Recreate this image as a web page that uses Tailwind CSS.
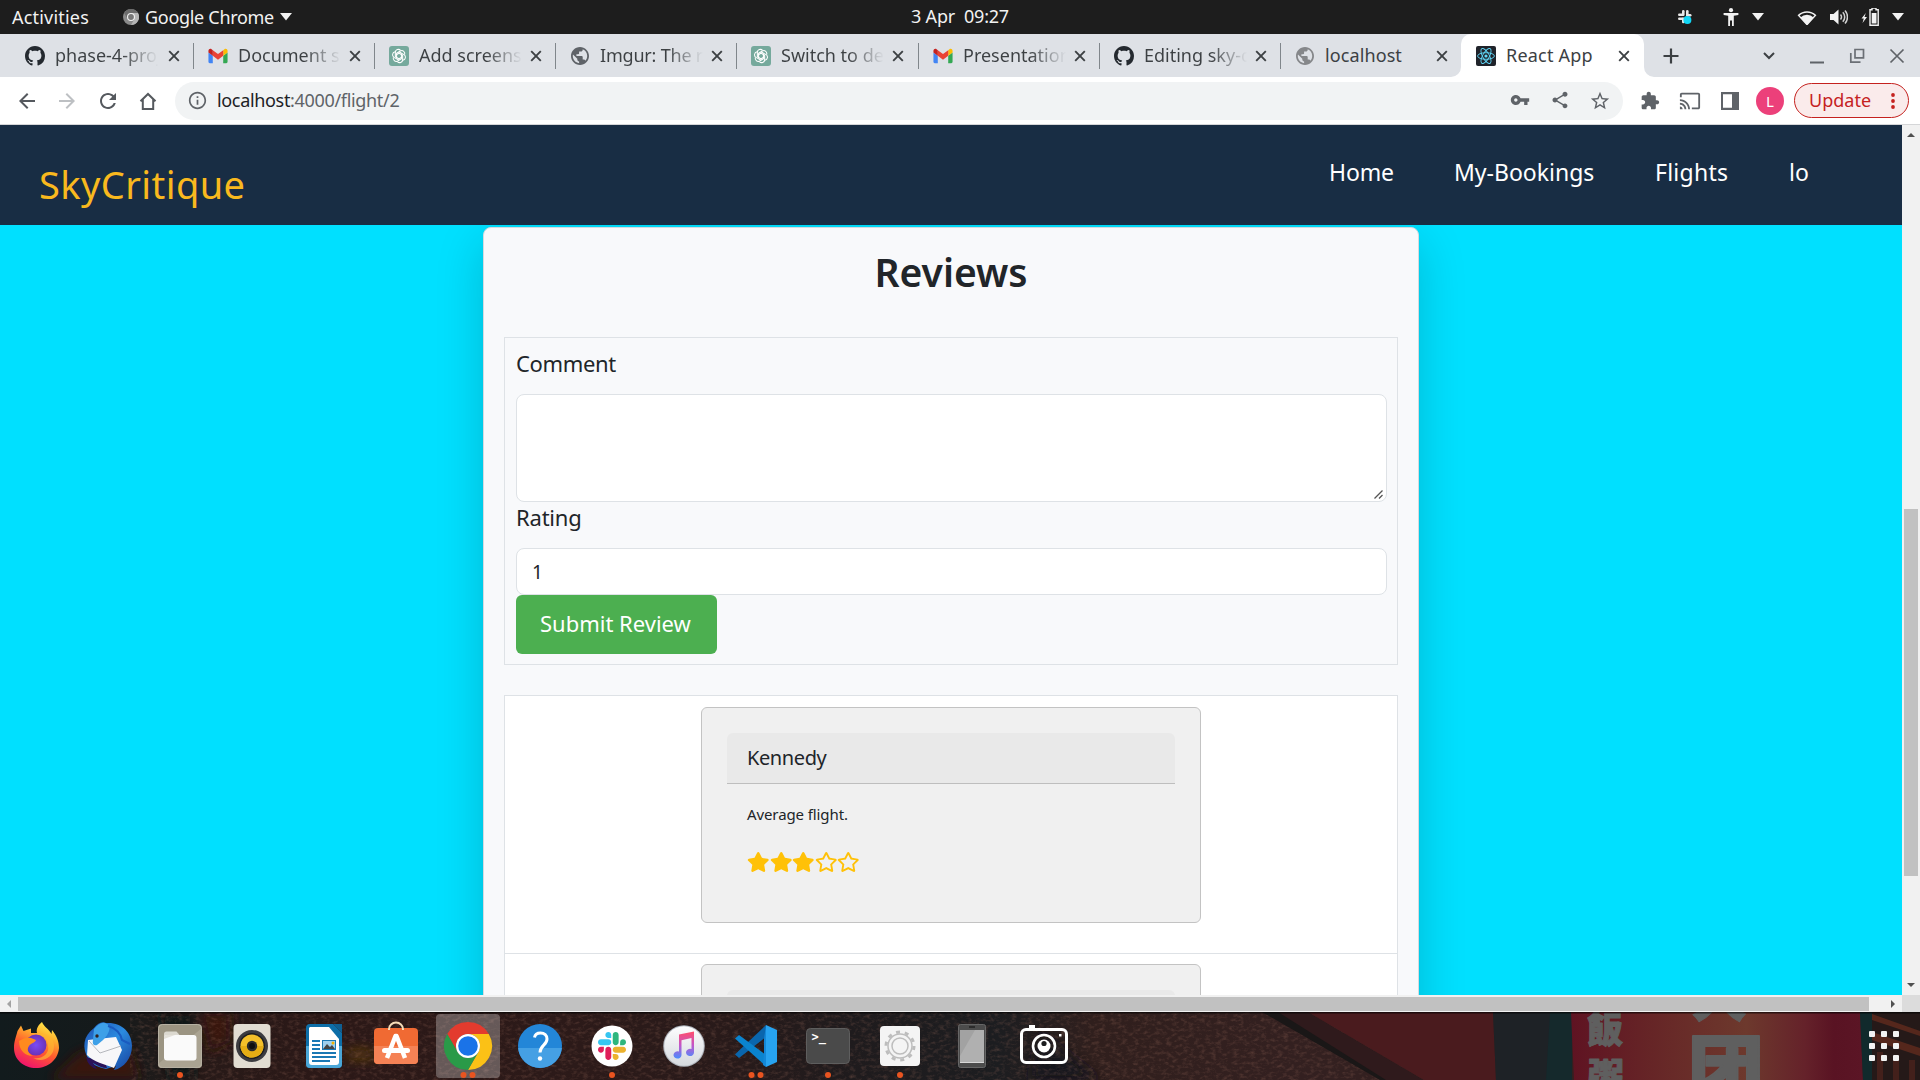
<!DOCTYPE html>
<html lang="en">
<head>
<meta charset="utf-8">
<title>React App</title>
<script src="https://cdn.jsdelivr.net/npm/@tailwindcss/browser@4"></script>
</head>
<body class="w-[1920px] h-[1080px] overflow-hidden flex flex-col font-['Noto_Sans','Noto_Sans_CJK_SC',sans-serif] bg-[#1d1d1d]">

<!-- Shared symbols -->
<svg class="hidden" aria-hidden="true">
  <symbol id="github" viewBox="0 0 16 16"><path fill="#24292f" d="M8 0C3.58 0 0 3.58 0 8c0 3.54 2.29 6.53 5.47 7.59.4.07.55-.17.55-.38 0-.19-.01-.82-.01-1.49-2.01.37-2.53-.49-2.69-.94-.09-.23-.48-.94-.82-1.13-.28-.15-.68-.52-.01-.53.63-.01 1.08.58 1.23.82.72 1.21 1.87.87 2.33.66.07-.52.28-.87.51-1.07-1.78-.2-3.64-.89-3.64-3.95 0-.87.31-1.59.82-2.15-.08-.2-.36-1.02.08-2.12 0 0 .67-.21 2.2.82.64-.18 1.32-.27 2-.27.68 0 1.36.09 2 .27 1.53-1.04 2.2-.82 2.2-.82.44 1.1.16 1.92.08 2.12.51.56.82 1.27.82 2.15 0 3.07-1.87 3.75-3.65 3.95.29.25.54.73.54 1.48 0 1.07-.01 1.93-.01 2.2 0 .21.15.46.55.38A8.013 8.013 0 0016 8c0-4.42-3.58-8-8-8z"/></symbol>
  <symbol id="gmail" viewBox="50 31 92 88"><path fill="#4285f4" d="M58 108h14V74L52 59v43c0 3.32 2.69 6 6 6"/><path fill="#34a853" d="M120 108h14c3.32 0 6-2.69 6-6V59l-20 15"/><path fill="#fbbc04" d="M120 48v26l20-15v-8c0-7.42-8.47-11.65-14.4-7.2"/><path fill="#ea4335" d="M72 74V48l24 18 24-18v26L96 92"/><path fill="#c5221f" d="M52 51v8l20 15V48l-5.6-4.2c-5.94-4.45-14.4-.22-14.4 7.2"/></symbol>
  <symbol id="gpt" viewBox="0 0 20 20"><rect width="20" height="20" rx="3" fill="#75a99c"/><g fill="none" stroke="#fff" stroke-width="1.05" stroke-linejoin="round"><path id="petal" d="M7.6 12.2V7.2L11.3 5a3 3 0 0 1 4.3 3.6"/><use href="#petal" transform="rotate(60 10 10)"/><use href="#petal" transform="rotate(120 10 10)"/><use href="#petal" transform="rotate(180 10 10)"/><use href="#petal" transform="rotate(240 10 10)"/><use href="#petal" transform="rotate(300 10 10)"/></g></symbol>
  <symbol id="globe" viewBox="2 2 20 20"><path d="M12 2C6.48 2 2 6.48 2 12s4.48 10 10 10 10-4.48 10-10S17.52 2 12 2zm-1 17.93c-3.95-.49-7-3.85-7-7.93 0-.62.08-1.21.21-1.79L9 15v1c0 1.1.9 2 2 2v1.93zm6.9-2.54c-.26-.81-1-1.39-1.9-1.39h-1v-3c0-.55-.45-1-1-1H8v-2h2c.55 0 1-.45 1-1V7h2c1.1 0 2-.9 2-2v-.41c2.93 1.19 5 4.06 5 7.41 0 2.08-.8 3.97-2.1 5.39z"/></symbol>
  <symbol id="react" viewBox="0 0 20 20"><rect width="20" height="20" rx="2" fill="#20232a"/><g fill="none" stroke="#61dafb" stroke-width=".9"><ellipse cx="10" cy="10" rx="8.4" ry="3.3"/><ellipse cx="10" cy="10" rx="8.4" ry="3.3" transform="rotate(60 10 10)"/><ellipse cx="10" cy="10" rx="8.4" ry="3.3" transform="rotate(120 10 10)"/></g><circle cx="10" cy="10" r="1.6" fill="#61dafb"/></symbol>
  <symbol id="close" viewBox="0 0 12 12"><path d="M1.2 1.2l9.6 9.6M10.8 1.2l-9.6 9.6" stroke="#3c4043" stroke-width="1.9" fill="none"/></symbol>
  <symbol id="caret" viewBox="0 0 12 8"><path d="M0 0h12L6 7.5z" fill="#f2f2f2"/></symbol>
  <symbol id="star" viewBox="0 0 576 512"><path fill="#ffc107" d="M259.3 17.8L194 150.2 47.9 171.5c-26.2 3.8-36.7 36.1-17.7 54.6l105.7 103-25 145.5c-4.5 26.3 23.2 46 46.4 33.7L288 439.6l130.7 68.7c23.2 12.2 50.9-7.4 46.4-33.7l-25-145.5 105.7-103c19-18.5 8.5-50.8-17.7-54.6L382 150.2 316.7 17.8c-11.7-23.6-45.6-23.9-57.4 0z"/></symbol>
  <symbol id="star-o" viewBox="0 0 576 512"><path fill="#ffc107" d="M528.1 171.5L382 150.2 316.7 17.8c-11.7-23.6-45.6-23.9-57.4 0L194 150.2 47.9 171.5c-26.2 3.8-36.7 36.1-17.7 54.6l105.7 103-25 145.5c-4.5 26.3 23.2 46 46.4 33.7L288 439.6l130.7 68.7c23.2 12.2 50.9-7.4 46.4-33.7l-25-145.5 105.7-103c19-18.5 8.5-50.8-17.7-54.6zM388.6 312.3l23.7 138.4L288 385.4l-124.3 65.3 23.7-138.4-100.6-98 139-20.2 62.2-126 62.2 126 139 20.2-100.6 98z"/></symbol>
  <symbol id="slack" viewBox="0 0 122.8 122.8"><path fill="#e01e5a" d="M25.8 77.6c0 7.1-5.8 12.9-12.9 12.9S0 84.7 0 77.6s5.8-12.9 12.9-12.9h12.9v12.9zm6.5 0c0-7.1 5.8-12.9 12.9-12.9s12.9 5.8 12.9 12.9v32.3c0 7.1-5.8 12.9-12.9 12.9s-12.9-5.8-12.9-12.9V77.6z"/><path fill="#36c5f0" d="M45.2 25.8c-7.1 0-12.9-5.8-12.9-12.9S38.1 0 45.2 0s12.9 5.8 12.9 12.9v12.9H45.2zm0 6.5c7.1 0 12.9 5.8 12.9 12.9s-5.8 12.9-12.9 12.9H12.9C5.8 58.1 0 52.3 0 45.2s5.8-12.9 12.9-12.9h32.3z"/><path fill="#2eb67d" d="M97 45.2c0-7.1 5.8-12.9 12.9-12.9s12.9 5.8 12.9 12.9-5.8 12.9-12.9 12.9H97V45.2zm-6.5 0c0 7.1-5.8 12.9-12.9 12.9s-12.9-5.8-12.9-12.9V12.9C64.7 5.8 70.5 0 77.6 0s12.9 5.8 12.9 12.9v32.3z"/><path fill="#ecb22e" d="M77.6 97c7.1 0 12.9 5.8 12.9 12.9s-5.8 12.9-12.9 12.9-12.9-5.8-12.9-12.9V97h12.9zm0-6.5c-7.1 0-12.9-5.8-12.9-12.9s5.8-12.9 12.9-12.9h32.3c7.1 0 12.9 5.8 12.9 12.9s-5.8 12.9-12.9 12.9H77.6z"/></symbol>
</svg>

<!-- GNOME top bar -->
<header class="relative h-[34px] shrink-0 bg-[#1d1d1d] text-[#f2f2f2] text-[18px] leading-[34px] flex items-center justify-between whitespace-pre">
  <div class="flex items-center pl-3">
    <span class="w-[111px] tracking-[0.2px]">Activities</span>
    <svg class="size-4 mr-[6px]" viewBox="0 0 16 16"><circle cx="8" cy="8" r="8" fill="#8a8a8a"/><path d="M8 4h7A8 8 0 0 1 8 16l3.5-6z" fill="#b5b5b5"/><path d="M8 4h7A8 8 0 0 0 1.2 4l3.5 6z" fill="#6b6b6b"/><circle cx="8" cy="8" r="4" fill="#f2f2f2"/><circle cx="8" cy="8" r="2.9" fill="#777"/></svg>
    <span class="w-[135px] tracking-[-0.3px]">Google Chrome</span>
    <svg class="w-3 h-2"><use href="#caret"/></svg>
  </div>
  <span class="absolute left-[911px] top-0 leading-[32px] tracking-[-0.2px]">3 Apr  09:27</span>
  <div class="flex items-center pr-4">
    <svg class="w-4 h-4 mr-[30px]" viewBox="0 0 16 16"><g fill="#e8e8e8"><rect x="5" y="1" width="2.6" height="6" rx="1.3"/><rect x="1" y="4.6" width="6" height="2.4" rx="1.2"/><rect x="9" y="1" width="2.6" height="6" rx="1.3"/><rect x="9" y="5" width="5.5" height="2.4" rx="1.2"/><rect x="1" y="8.6" width="6" height="2.4" rx="1.2"/><rect x="5" y="8.6" width="2.6" height="5.6" rx="1.3"/></g><circle cx="10.4" cy="11" r="4" fill="#12d6f5"/></svg>
    <svg class="w-4 h-[18px] mr-[13px]" viewBox="0 0 16 18" fill="#f2f2f2"><circle cx="8" cy="2.2" r="2.1"/><path d="M.6 5h14.8v1.9l-4.6.8V18H9v-5.4H7V18H5.200V7.700L.6 6.900z"/></svg>
    <svg class="w-3 h-2 mr-[33px]"><use href="#caret"/></svg>
    <svg class="w-5 h-4 mr-[13px]" viewBox="0 0 20 16"><path d="M10 16L3.400 8.400a9.500 9.500 0 0 1 13.200 0z" fill="#f2f2f2"/><path d="M1.600 6.400a12 12 0 0 1 16.800 0L10 15.500z" fill="none" stroke="#f2f2f2" stroke-width="1.500"/></svg>
    <svg class="w-[18px] h-4 mr-[13px]" viewBox="0 0 18 16"><path d="M0 5h3.500L8.500.5v15L3.500 11H0z" fill="#f2f2f2"/><path d="M10.500 5.500a4 4 0 0 1 0 5M12.800 3.200a7 7 0 0 1 0 9.600M15 1.400a10 10 0 0 1 0 13.200" fill="none" stroke="#f2f2f2" stroke-width="1.500" opacity=".85"/></svg>
    <svg class="w-[19px] h-[18px] mr-[12px]" viewBox="0 0 19 18"><path d="M4.800 5L.5 10.500h2.300L1.500 15 6 9H3.500z" fill="#f2f2f2"/><path d="M9 1.700h2V0h4v1.700h2.200V17.300H9z" fill="none" stroke="#f2f2f2" stroke-width="1.400"/><rect x="10.700" y="5" width="4.800" height="10.500" fill="#f2f2f2"/></svg>
    <svg class="w-3 h-2"><use href="#caret"/></svg>
  </div>
</header>

<!-- Browser tab strip -->
<div class="h-[43px] shrink-0 bg-[#dee1e6] text-[#3c4043] text-[18px] leading-[43px] flex items-center pl-[13px] whitespace-nowrap">
  <div class="w-[181px] h-[43px] flex items-center pl-3 relative"><svg class="size-5 mr-[10px]"><use href="#github"/></svg><span class="w-[103px] mr-[10px] overflow-hidden bg-linear-to-r from-[#3c4043] from-65% to-transparent bg-clip-text text-transparent">phase-4-proj</span><svg class="size-3"><use href="#close"/></svg><i class="absolute right-0 top-[9px] w-px h-[26px] bg-[#80868b]"></i></div>
  <div class="w-[181px] h-[43px] flex items-center pl-[14px] relative"><svg class="size-5 mr-[10px]"><use href="#gmail"/></svg><span class="w-[103px] mr-2 overflow-hidden bg-linear-to-r from-[#3c4043] from-65% to-transparent bg-clip-text text-transparent">Document s</span><svg class="size-3"><use href="#close"/></svg><i class="absolute right-0 top-[9px] w-px h-[26px] bg-[#80868b]"></i></div>
  <div class="w-[181px] h-[43px] flex items-center pl-[14px] relative"><svg class="size-5 mr-[10px]"><use href="#gpt"/></svg><span class="w-[103px] mr-2 overflow-hidden bg-linear-to-r from-[#3c4043] from-65% to-transparent bg-clip-text text-transparent">Add screens</span><svg class="size-3"><use href="#close"/></svg><i class="absolute right-0 top-[9px] w-px h-[26px] bg-[#80868b]"></i></div>
  <div class="w-[181px] h-[43px] flex items-center pl-[15px] relative"><svg class="size-[18px] mr-[11px] fill-[#5f6368]"><use href="#globe"/></svg><span class="w-[103px] mr-2 overflow-hidden bg-linear-to-r from-[#3c4043] from-65% to-transparent bg-clip-text text-transparent tracking-[-0.2px]">Imgur: The r</span><svg class="size-3"><use href="#close"/></svg><i class="absolute right-0 top-[9px] w-px h-[26px] bg-[#80868b]"></i></div>
  <div class="w-[182px] h-[43px] flex items-center pl-[14px] relative"><svg class="size-5 mr-[10px]"><use href="#gpt"/></svg><span class="w-[103px] mr-2 overflow-hidden bg-linear-to-r from-[#3c4043] from-65% to-transparent bg-clip-text text-transparent">Switch to de</span><svg class="size-3"><use href="#close"/></svg><i class="absolute right-0 top-[9px] w-px h-[26px] bg-[#80868b]"></i></div>
  <div class="w-[181px] h-[43px] flex items-center pl-[14px] relative"><svg class="size-5 mr-[10px]"><use href="#gmail"/></svg><span class="w-[103px] mr-2 overflow-hidden bg-linear-to-r from-[#3c4043] from-65% to-transparent bg-clip-text text-transparent">Presentation</span><svg class="size-3"><use href="#close"/></svg><i class="absolute right-0 top-[9px] w-px h-[26px] bg-[#80868b]"></i></div>
  <div class="w-[181px] h-[43px] flex items-center pl-[14px] relative"><svg class="size-5 mr-[10px]"><use href="#github"/></svg><span class="w-[103px] mr-2 overflow-hidden bg-linear-to-r from-[#3c4043] from-65% to-transparent bg-clip-text text-transparent">Editing sky-c</span><svg class="size-3"><use href="#close"/></svg><i class="absolute right-0 top-[9px] w-px h-[26px] bg-[#80868b]"></i></div>
  <div class="w-[180px] h-[43px] flex items-center pl-[15px]"><svg class="size-[18px] mr-[11px] fill-[#85878a]"><use href="#globe"/></svg><span class="w-[103px] mr-2 tracking-[0.1px]">localhost</span><svg class="size-3"><use href="#close"/></svg></div>
  <div class="relative w-[183px] h-[43px] bg-white rounded-t-[10px] flex items-center pl-[15px]">
    <svg class="absolute -left-[10px] bottom-0 size-[10px]" viewBox="0 0 10 10"><path d="M10 0v10H0A10 10 0 0 0 10 0z" fill="#fff"/></svg>
    <svg class="absolute -right-[10px] bottom-0 size-[10px]" viewBox="0 0 10 10"><path d="M0 0v10h10A10 10 0 0 1 0 0z" fill="#fff"/></svg>
    <svg class="size-5 mr-[10px]"><use href="#react"/></svg><span class="w-[103px] mr-[9px] tracking-[0.2px]">React App</span><svg class="size-3"><use href="#close"/></svg></div>
  <svg class="size-4 ml-[19px]" viewBox="0 0 16 16"><path d="M8 .5v15M.5 8h15" stroke="#3c4043" stroke-width="2.200"/></svg>
  <div class="ml-auto mr-[15px] flex items-center">
    <svg class="w-3 h-2 mr-[34px]" viewBox="0 0 12 8"><path d="M1 1l5 5 5-5" fill="none" stroke="#3c4043" stroke-width="2"/></svg>
    <svg class="size-4 mr-6" viewBox="0 0 16 16"><path d="M1 14.500h14" stroke="#5f6368" stroke-width="2"/></svg>
    <svg class="size-4 mr-6" viewBox="0 0 16 16"><path d="M6 1.500h8.500v8.300H6zM1.800 5v9.200h9.700" fill="none" stroke="#6b6f75" stroke-width="1.700"/></svg>
    <svg class="size-4" viewBox="0 0 16 16"><path d="M1.500 1.500l13 13M14.500 1.500l-13 13" stroke="#5f6368" stroke-width="1.700"/></svg>
  </div>
</div>

<!-- Toolbar -->
<div class="h-12 shrink-0 bg-white border-b border-[#d5d6d8] flex items-center pl-[15px] pr-[11px]">
  <svg class="size-6 mr-4" viewBox="0 0 24 24" fill="#55595e"><path d="M20 11H7.830l5.590-5.590L12 4l-8 8 8 8 1.410-1.410L7.830 13H20v-2z"/></svg>
  <svg class="size-6 mr-[17px]" viewBox="0 0 24 24" fill="#bdc0c3"><path d="M12 4l-1.410 1.410L16.170 11H4v2h12.170l-5.580 5.590L12 20l8-8z"/></svg>
  <svg class="size-6 mr-4" viewBox="0 0 24 24" fill="#55595e"><path d="M17.650 6.350C16.200 4.900 14.210 4 12 4c-4.420 0-7.990 3.580-7.990 8s3.570 8 7.990 8c3.730 0 6.840-2.550 7.730-6h-2.080c-.82 2.330-3.040 4-5.650 4-3.310 0-6-2.690-6-6s2.690-6 6-6c1.660 0 3.140.69 4.220 1.780L13 11h7V4l-2.350 2.350z"/></svg>
  <svg class="size-6 mr-[15px]" viewBox="0 0 24 24"><path d="M4.500 12.300L12 5l7.500 7.300M6.800 10.500V20h10.400v-9.500" fill="none" stroke="#55595e" stroke-width="2"/></svg>
  <div class="w-[1448px] h-[38px] rounded-full bg-[#f1f3f4] flex items-center pl-[13px] pr-[3px] mr-[7px]">
    <svg class="size-[19px] mr-[10px]" viewBox="1 1 22 22" fill="#5f6368"><path d="M11 7h2v2h-2zm0 4h2v6h-2zm1-9C6.480 2 2 6.480 2 12s4.480 10 10 10 10-4.480 10-10S17.520 2 12 2zm0 18c-4.410 0-8-3.590-8-8s3.590-8 8-8 8 3.590 8 8-3.590 8-8 8z"/></svg>
    <span class="text-[18px] leading-[36px] tracking-[-0.33px] text-[#5f6368] pb-0.5"><span class="text-[#202124]">localhost</span>:4000/flight/2</span>
    <div class="ml-auto flex fill-[#5f6368]">
      <span class="w-10 flex justify-center"><svg class="size-5" viewBox="0 0 24 24"><path d="M12.650 10C11.830 7.670 9.610 6 7 6c-3.310 0-6 2.690-6 6s2.690 6 6 6c2.610 0 4.830-1.670 5.650-4H17v4h4v-4h2v-4H12.650zM7 14c-1.100 0-2-.9-2-2s.9-2 2-2 2 .9 2 2-.9 2-2 2z"/></svg></span>
      <span class="w-10 flex justify-center"><svg class="size-5" viewBox="0 0 24 24"><path d="M18 16.080c-.76 0-1.440.3-1.960.77L8.910 12.700c.05-.23.09-.46.09-.7s-.04-.47-.09-.7l7.050-4.110c.54.5 1.250.81 2.040.81 1.660 0 3-1.340 3-3s-1.340-3-3-3-3 1.340-3 3c0 .24.04.47.09.7L8.040 9.810C7.500 9.310 6.790 9 6 9c-1.660 0-3 1.340-3 3s1.340 3 3 3c.79 0 1.500-.31 2.040-.81l7.120 4.160c-.05.21-.08.43-.08.65 0 1.610 1.310 2.920 2.920 2.920s2.920-1.310 2.920-2.920-1.310-2.920-2.920-2.920z"/></svg></span>
      <span class="w-10 flex justify-center"><svg class="size-[22px]" viewBox="0 0 24 24"><path d="M22 9.240l-7.190-.62L12 2 9.190 8.630 2 9.240l5.460 4.730L5.820 21 12 17.270 18.180 21l-1.630-7.030L22 9.240zM12 15.400l-3.760 2.270 1-4.280-3.320-2.880 4.380-.38L12 6.100l1.710 4.040 4.380.38-3.320 2.880 1 4.280L12 15.400z"/></svg></span>
    </div>
  </div>
  <div class="flex items-center fill-[#5f6368]">
    <span class="w-10 flex justify-center"><svg class="size-5" viewBox="0 0 24 24"><path d="M20.500 11H19V7c0-1.100-.9-2-2-2h-4V3.500C13 2.120 11.880 1 10.500 1S8 2.120 8 3.500V5H4c-1.100 0-1.990.9-1.990 2v3.800H3.500c1.490 0 2.700 1.210 2.700 2.700s-1.210 2.700-2.700 2.700H2V20c0 1.100.9 2 2 2h3.800v-1.500c0-1.490 1.210-2.700 2.700-2.700 1.490 0 2.700 1.210 2.700 2.700V22H17c1.100 0 2-.9 2-2v-4h1.500c1.380 0 2.500-1.120 2.500-2.500S21.880 11 20.500 11z"/></svg></span>
    <span class="w-10 flex justify-center"><svg class="size-[22px]" viewBox="0 0 24 24"><path d="M21 3H3c-1.100 0-2 .9-2 2v3h2V5h18v14h-7v2h7c1.100 0 2-.9 2-2V5c0-1.100-.9-2-2-2zM1 18v3h3c0-1.660-1.340-3-3-3zm0-4v2c2.760 0 5 2.240 5 5h2c0-3.870-3.130-7-7-7zm0-4v2c4.970 0 9 4.030 9 9h2c0-6.080-4.930-11-11-11z"/></svg></span>
    <span class="w-[39px] flex justify-center"><svg class="size-[18px]" viewBox="0 0 18 18"><path d="M0 0h18v18H0zM2 2.200v13.600h9V2.200z" fill-rule="evenodd"/></svg></span>
    <span class="w-[42px] flex justify-center"><span class="size-7 rounded-full bg-[#ec407a] text-white text-[15px] leading-7 text-center">L</span></span>
  </div>
  <div class="ml-auto w-[115px] h-[35px] rounded-full border-[1.5px] border-[#c5221f] bg-[#faebeb] text-[#c5221f] flex items-center pl-[14px] pr-[13px] justify-between">
    <span class="text-[18px] leading-[30px] pb-px">Update</span>
    <svg class="w-[4px] h-4" viewBox="0 0 4 16" fill="#c5221f"><circle cx="2" cy="2" r="1.900"/><circle cx="2" cy="8" r="1.900"/><circle cx="2" cy="14" r="1.900"/></svg>
  </div>
</div>

<!-- Web page viewport -->
<div class="h-[870px] shrink-0 flex">
  <div class="w-[1902px] flex flex-col overflow-hidden">
    <nav class="relative z-10 h-[100px] shrink-0 bg-[#182d44] flex justify-between pl-[39px] pr-[92px]">
      <span class="text-[#f9b91e] text-[38px] leading-[118px] tracking-[0.42px]">SkyCritique</span>
      <div class="flex text-white text-[23px] leading-[94px]">
        <span class="w-[125px] tracking-[-0.15px]">Home</span><span class="w-[201px]">My-Bookings</span><span class="w-[134px] tracking-[0.25px]">Flights</span><span class="w-[21px]">lo</span>
      </div>
    </nav>
    <main class="flex-1 bg-[#00e0ff] pt-[2px] overflow-hidden">
      <section class="w-[936px] h-[1100px] mx-auto rounded-lg border border-[#d5dade] bg-[#f8f9fb] text-[#212529] shadow-[0_16px_48px_rgba(0,0,0,0.175)] px-5 pt-5">
        <h1 class="h-12 text-center text-[39px] leading-[48px] font-semibold mb-[41px]">Reviews</h1>
        <form class="w-[894px] h-[328px] border border-[#dee2e6] pl-[11px] pr-[10px] pt-[9px] pb-[10px] text-[22px] leading-8 mb-[30px]">
          <label class="block mb-[15px] tracking-[-0.35px]">Comment</label>
          <div class="relative h-[108px] bg-white border border-[#dee2e6] rounded-lg">
            <svg class="absolute right-[3px] bottom-[2px] size-[9px]" viewBox="0 0 9 9"><path d="M.5 8.500L8.500.5M5 8.500L8.500 5" stroke="#555" stroke-width="1.300"/></svg>
          </div>
          <label class="block h-[46px] leading-[30px] tracking-[-0.2px]">Rating</label>
          <div class="h-[47px] bg-white border border-[#dee2e6] rounded-lg pl-[15px] text-[19px] leading-[47px]">1</div>
          <div class="w-[201px] h-[59px] bg-[#4caf50] text-white rounded-md pl-[24px] leading-[57px]">Submit Review</div>
        </form>
        <div class="w-[894px] border border-[#dee2e6] bg-white">
          <div class="h-[258px] border-b border-[#dee2e6] pt-[11px]">
            <article class="w-[500px] h-[216px] ml-[196px] rounded-md border border-[#c3c3c3] bg-[#f0f0f0] px-[25px] pt-[25px]">
              <div class="h-[51px] bg-[#e9e9e9] border-b border-[#bebebe] rounded-t-md pl-5 text-[20px] leading-[49px] tracking-[-0.4px]">Kennedy</div>
              <p class="pl-5 pt-[19px] text-[15px] leading-[22px] tracking-[-0.1px]">Average flight.</p>
              <div class="flex pl-5 mt-[27px]">
                <svg class="w-[22.5px] h-5"><use href="#star"/></svg><svg class="w-[22.5px] h-5"><use href="#star"/></svg><svg class="w-[22.5px] h-5"><use href="#star"/></svg><svg class="w-[22.5px] h-5"><use href="#star-o"/></svg><svg class="w-[22.5px] h-5"><use href="#star-o"/></svg>
              </div>
            </article>
          </div>
          <div class="h-[257px] pt-[10px]">
            <article class="w-[500px] h-[216px] ml-[196px] rounded-md border border-[#c3c3c3] bg-[#f0f0f0] px-[25px] pt-[25px]">
              <div class="h-[51px] bg-[#e9e9e9] border-b border-[#bebebe] rounded-t-md"></div>
            </article>
          </div>
        </div>
      </section>
    </main>
  </div>
  <!-- Vertical scrollbar -->
  <div class="w-[18px] bg-[#f1f1f1] flex flex-col items-center">
    <svg class="w-2 h-1 mt-2" viewBox="0 0 8 4"><path d="M0 4h8L4 0z" fill="#505050"/></svg>
    <div class="mt-[372px] w-[14px] h-[367px] bg-[#c1c1c1]"></div>
    <svg class="w-2 h-1 mt-[107px]" viewBox="0 0 8 4"><path d="M0 0h8L4 4z" fill="#505050"/></svg>
  </div>
</div>

<!-- Horizontal scrollbar -->
<div class="h-[17px] shrink-0 bg-[#f1f1f1] flex items-center">
  <svg class="w-1 h-2 ml-[7px] mr-[7px]" viewBox="0 0 4 8"><path d="M4 0v8L0 4z" fill="#a3a3a3"/></svg>
  <div class="w-[1851px] h-[14px] mt-px bg-[#c1c1c1]"></div>
  <svg class="w-1 h-2 ml-[22px]" viewBox="0 0 4 8"><path d="M0 0v8l4-4z" fill="#505050"/></svg>
  <div class="ml-auto w-[18px] h-[17px] bg-[#dcdcdc]"></div>
</div>

<!-- Dock -->
<footer class="relative h-[68px] shrink-0 overflow-hidden bg-[#231c1c]">
  <svg class="absolute inset-0 w-[1920px] h-[68px]" viewBox="0 0 1920 68">
    <defs>
      <linearGradient id="wall"><stop offset="0" stop-color="#121b1d"/><stop offset=".06" stop-color="#151a1b"/><stop offset=".1" stop-color="#271a18"/><stop offset=".17" stop-color="#2b1817"/><stop offset=".3" stop-color="#2c1a19"/><stop offset=".38" stop-color="#281a1a"/><stop offset=".44" stop-color="#1f1b1d"/><stop offset=".52" stop-color="#1c1d20"/><stop offset=".57" stop-color="#301f1d"/><stop offset=".67" stop-color="#332020"/></linearGradient>
      <linearGradient id="sign"><stop offset="0" stop-color="#5f1322"/><stop offset=".35" stop-color="#682a28"/><stop offset=".6" stop-color="#6d392d"/><stop offset=".8" stop-color="#65222a"/><stop offset=".9" stop-color="#591323"/><stop offset="1" stop-color="#5b1525"/></linearGradient>
      <filter id="grain" x="0" y="0" width="100%" height="100%"><feTurbulence type="fractalNoise" baseFrequency=".18 .3" numOctaves="3" seed="4"/><feColorMatrix values="0 0 0 0 .45  0 0 0 0 .2  0 0 0 0 .14  1.800 0 0 0 -.82"/></filter>
      <filter id="soft"><feGaussianBlur stdDeviation="6"/></filter>
    </defs>
    <rect width="1920" height="68" fill="url(#wall)"/>
    <g filter="url(#soft)"><path d="M50 68L80 40l50-6 10 34zM200 0h30v30l-20 10z" fill="#38190f"/><path d="M160 0h34v68h-24z" fill="#0e1414"/><path d="M345 42q14-10 30 0v5h-26z" fill="#5a3a10"/><path d="M1040 20l60 48h-70z" fill="#18191c"/></g>
    <rect x="130" width="1300" height="68" filter="url(#grain)" opacity=".32"/>
    <path d="M1262 0h32l126 68h-40z" fill="#1a1717"/><path d="M1278 0h30l116 68h-38z" fill="#2f1a1c"/>
    <path d="M1308 0h185l3 68h-72z" fill="#4a1b1e"/>
    <path d="M1493 0h60v68h-57z" fill="#1e2226"/><path d="M1550 0h22v68h-26z" fill="#15292c"/>
    <path d="M1571 0h289l3 68h-289z" fill="url(#sign)"/>
    <path d="M1860 0h12v68h-9z" fill="#112a2c"/><path d="M1872 0h48v68h-48z" fill="#251918"/><path d="M1872 2l48 17v5l-48-16zM1872 20l48 16v8l-48-16z" fill="#55271c"/><path d="M1880 40v28M1896 44v24M1912 48v20" stroke="#43201b" stroke-width="6"/>
    <g fill="#5f5f5f" stroke="#5f5f5f" stroke-width="1" stroke-linejoin="round" font-family="Noto Sans CJK TC, Noto Sans CJK SC, sans-serif" font-weight="900"><text x="1587" y="31" font-size="36">飯</text><text x="1588" y="78" font-size="36">粥</text><text x="1691" y="4" font-size="56">大</text><text x="1688" y="87" font-size="76" stroke-width="2">团</text></g>
    <rect width="1920" height="1.500" fill="#000" opacity=".6"/>
  </svg>

  <div class="relative flex h-[68px]">
    <!-- Firefox -->
    <svg class="w-[72px] h-[68px]" viewBox="0 0 72 68">
      <defs><linearGradient id="ff" x1=".8" y1="0" x2=".35" y2="1"><stop offset="0" stop-color="#fff44f"/><stop offset=".3" stop-color="#ffb02e"/><stop offset=".6" stop-color="#ff5b2d"/><stop offset="1" stop-color="#f0146c"/></linearGradient><radialGradient id="ffp"><stop offset="0" stop-color="#7a4bf5"/><stop offset="1" stop-color="#6a32b8"/></radialGradient></defs>
      <path d="M14 36C14 29 16 25 17.500 19L21 13.500 23.500 19 31 16.500 31 21 37 21C36 17 38 13 42 10 44 15 49 17 51.500 22L52 18C57 24 59 30 59 36 58 48 48 56 36 56 24 56 14 48 14 36z" fill="url(#ff)"/>
      <circle cx="36" cy="33" r="10.500" fill="url(#ffp)"/>
      <path d="M19 29c4-3 9-4 12-3l5 2c-1 3-5 3-7 6-3 4 0 8 4 10-8 0-14-6-14-15z" fill="#ff8a1e"/>
      <path d="M36 22c7 0 12 5 12 12 2 7-6 14-15 12 9 5 21 0 21-12 0-8-7-14-18-12z" fill="#ffb630" opacity=".7"/>
    </svg>
    <!-- Thunderbird -->
    <svg class="w-[72px] h-[68px]" viewBox="0 0 72 68">
      <defs><linearGradient id="tb" x1="0" y1="0" x2="1" y2="1"><stop offset="0" stop-color="#1d4fb0"/><stop offset=".5" stop-color="#2b8be0"/><stop offset="1" stop-color="#173f9a"/></linearGradient></defs>
      <path d="M22 16C26 11 30 9 34 11 50 10 60 21 60 34 60 46 52 56 42 58L44 54 34 57C26 55 20 53 16 46 10 36 11 24 22 16z" fill="url(#tb)"/>
      <path d="M14 45q2 10 11 12l-4-6q8 5 14 5l-2-6z" fill="#2a1258"/>
      <path d="M16 28L44 25 50 38 42 56C32 52 22 50 15 43z" fill="#f7f7f9"/>
      <path d="M17 29l11 12 21-7" fill="none" stroke="#b5b7bd" stroke-width="1"/>
      <path d="M22 17c4-5 9-8 13-5 5 2 3 12-10 21-2 1-5 0-4-5z" fill="#3da0e8"/><path d="M36 14c8 2 13 8 14 14l8 4" stroke="#1a5bc0" stroke-width="2" fill="none"/>
      <circle cx="25" cy="24" r="1.700" fill="#33201e"/>
    </svg>
    <!-- Files -->
    <svg class="w-[72px] h-[68px]" viewBox="0 0 72 68">
      <rect x="14" y="12" width="44" height="44" rx="4" fill="#9b9482"/><path d="M14 52L58 16v36a4 4 0 0 1-4 4H18a4 4 0 0 1-4-4z" fill="#aaa392"/><rect x="14.500" y="12.500" width="43" height="43" rx="4" fill="none" stroke="#b6b0a2"/>
      <path d="M20 22a2.500 2.500 0 0 1 2.500-2.500h10l3 3.500H49v6H20z" fill="#dcd9d0"/><rect x="20" y="23" width="32.500" height="25.500" rx="3" fill="#fafafa"/><path d="M20 27V25q0-2 3-2h9l3-1.500z" fill="#e4e1da"/>
      <circle cx="36" cy="63" r="3" fill="#e95420"/>
    </svg>
    <!-- Rhythmbox -->
    <svg class="w-[72px] h-[68px]" viewBox="0 0 72 68">
      <rect x="17.500" y="12" width="37" height="44" rx="4" fill="#e2ddd2"/><circle cx="36" cy="34" r="16" fill="#3c3c40"/><circle cx="36" cy="34" r="13" fill="#1e1e20"/><circle cx="36" cy="34" r="11.500" fill="#f4c02a"/><path d="M24.500 34a11.500 11.500 0 0 0 23 0z" fill="#e5ad14"/><circle cx="36" cy="34" r="5.200" fill="#2a2a2a"/><circle cx="36" cy="34" r="3" fill="#0f0f0f"/>
    </svg>
    <!-- LibreOffice Writer -->
    <svg class="w-[72px] h-[68px]" viewBox="0 0 72 68">
      <path d="M22 12h23l9 9v31a4 4 0 0 1-4 4H22a4 4 0 0 1-4-4V16a4 4 0 0 1 4-4z" fill="#0d6ea8"/><path d="M18 34h36v18a4 4 0 0 1-4 4H22a4 4 0 0 1-4-4z" fill="#4aa7d8"/><path d="M45 12h9v9z" fill="#0f5f92"/><path d="M22 15h19l10 12v23a3 3 0 0 1-3 3H24a3 3 0 0 1-3-3V16z" fill="#fff"/>
      <path d="M24 29h8M24 33h8M24 37h8M24 41h24M24 45h24M24 49h18" stroke="#1a78b4" stroke-width="1.800"/><rect x="34.500" y="28.500" width="13" height="9" fill="#9fd0ee" stroke="#1a78b4"/><path d="M35 37l4-5 3 3 2-2 3 4z" fill="#444"/><circle cx="45" cy="31" r="1.500" fill="#f4b400"/>
    </svg>
    <!-- Ubuntu Software -->
    <svg class="w-[72px] h-[68px]" viewBox="0 0 72 68">
      <rect x="14" y="16" width="44" height="36" rx="4" fill="#f06a33"/><path d="M14 34h44v14a4 4 0 0 1-4 4H18a4 4 0 0 1-4-4z" fill="#f58255"/><path d="M29 18v-1a7 6.500 0 0 1 14 0v1" fill="none" stroke="#f6dcb8" stroke-width="2"/>
      <path d="M27 46l8.500-22h1L45 46" fill="none" stroke="#fff" stroke-width="4.500" stroke-linejoin="round"/><rect x="22" y="36" width="28" height="5" rx="2.500" fill="#fff"/>
    </svg>
    <!-- Chrome -->
    <svg class="w-[72px] h-[68px]" viewBox="0 0 72 68">
      <rect x="4" y="2" width="64" height="64" rx="4" fill="#fff" opacity=".28"/>
      <g transform="translate(12 10)"><path fill="#e33b2e" d="M24 12H44.785A24 24 0 0 0 3.215 12L13.608 30A12 12 0 0 1 24 12z"/><path fill="#fbc116" d="M34.392 30L24 48A24 24 0 0 0 44.785 12H24A12 12 0 0 1 34.392 30z"/><path fill="#2a9a48" d="M13.608 30L3.215 12A24 24 0 0 0 24 48L34.392 30A12 12 0 0 1 13.608 30z"/><circle cx="24" cy="24" r="12" fill="#fff"/><circle cx="24" cy="24" r="9.800" fill="#1a73e8"/></g>
      <circle cx="31.500" cy="63" r="3" fill="#e95420"/><circle cx="40.500" cy="63" r="3" fill="#e95420"/>
    </svg>
    <!-- Help -->
    <svg class="w-[72px] h-[68px]" viewBox="0 0 72 68">
      <circle cx="36" cy="34" r="22" fill="#2386d8"/><path d="M14.100 36h43.800a22 22 0 0 1-43.800 0z" fill="#45a0e4"/>
      <path d="M30.500 25.500c.5-3 3-4.500 6-4.500 4 0 6.500 2.500 6.500 6 0 6-7 6.500-7 13.500" fill="none" stroke="#fff" stroke-width="3"/><circle cx="36" cy="46.500" r="2.200" fill="#fff"/>
    </svg>
    <!-- Slack -->
    <svg class="w-[72px] h-[68px]" viewBox="0 0 72 68">
      <circle cx="36" cy="34" r="20.500" fill="#fff"/><use href="#slack" x="22" y="20" width="28" height="28"/><circle cx="36" cy="63" r="3" fill="#e95420"/>
    </svg>
    <!-- Music -->
    <svg class="w-[72px] h-[68px]" viewBox="0 0 72 68">
      <defs><linearGradient id="mu" x1="0" y1="0" x2="0" y2="1"><stop offset="0" stop-color="#ff4e6b"/><stop offset=".5" stop-color="#c455c8"/><stop offset="1" stop-color="#4a8cff"/></linearGradient><linearGradient id="mb" x1="0" y1="0" x2="0" y2="1"><stop offset="0" stop-color="#fdfdfe"/><stop offset="1" stop-color="#d5d9de"/></linearGradient></defs>
      <circle cx="36" cy="34" r="20.800" fill="#aeb4bc"/><circle cx="36" cy="34" r="19.800" fill="url(#mb)"/><path d="M31 22.500l15-3V40.500a4 3.600 0 1 1-2.500-3.400V26l-10 2.200V43a4 3.600 0 1 1-2.500-3.400z" fill="url(#mu)"/>
    </svg>
    <!-- VS Code -->
    <svg class="w-[72px] h-[68px]" viewBox="0 0 72 68">
      <path d="M46 13L18 39.500l-3 3 4 3.500L46 25z" fill="#0a66ad"/><path d="M19 23l-4 3.500 30 27L46 43z" fill="#0a84cf"/><path d="M46 13l11 5v32l-11 5z" fill="#27a3f0"/><path d="M46 13v42l-3-2 1-12V27z" fill="#1488d8"/>
      <circle cx="31.500" cy="63" r="3" fill="#e95420"/><circle cx="40.500" cy="63" r="3" fill="#e95420"/>
    </svg>
    <!-- Terminal -->
    <svg class="w-[72px] h-[68px]" viewBox="0 0 72 68">
      <rect x="14.500" y="16.500" width="43" height="35" rx="4" fill="#4a4a4a" stroke="#5e5e5e"/><text x="19.500" y="29" fill="#fff" font-family="DejaVu Sans Mono, monospace" font-weight="bold" font-size="12">&gt;_</text><circle cx="36" cy="63" r="3" fill="#e95420"/>
    </svg>
    <!-- Settings -->
    <svg class="w-[72px] h-[68px]" viewBox="0 0 72 68">
      <rect x="16" y="14" width="40" height="40" rx="4" fill="#f4f4f4"/><g fill="none" stroke="#bdbdbd"><circle cx="36" cy="34" r="14" stroke-width="3" stroke-dasharray="4 4.796"/><circle cx="36" cy="34" r="12" stroke-width="1.500"/><circle cx="36" cy="34" r="8" stroke-width="1.500"/></g><circle cx="36" cy="63" r="3" fill="#e95420"/>
    </svg>
    <!-- Phone -->
    <svg class="w-[72px] h-[68px]" viewBox="0 0 72 68">
      <rect x="22.500" y="12.500" width="27" height="43" rx="2" fill="#4c4c4c" stroke="#666"/><rect x="24" y="18" width="24" height="32.500" fill="#b0b0b0"/><path d="M24 18h15L24 44z" fill="#a2a2a2"/><path d="M24 50.500h24" stroke="#d8d8d8"/><path d="M33 15h6" stroke="#222" stroke-width="1.500"/>
    </svg>
    <!-- Camera -->
    <svg class="w-[72px] h-[68px]" viewBox="0 0 72 68">
      <rect x="13.500" y="17.500" width="45" height="33" rx="4.500" fill="none" stroke="#fff" stroke-width="3"/><rect x="21" y="13" width="6" height="4" fill="#fff"/><circle cx="36" cy="34" r="11" fill="none" stroke="#fff" stroke-width="2.600"/><circle cx="36" cy="34" r="6.500" fill="#fff"/><circle cx="36" cy="31.500" r="2.600" fill="#1c1d1f"/><rect x="51" y="22" width="2.500" height="2.500" fill="#fff"/>
    </svg>
    <!-- App grid -->
    <div class="ml-auto mr-[21px] my-auto grid grid-cols-3 gap-[6px]">
      <i class="size-[6px] bg-[#f2f2f2] rounded-[1px]"></i><i class="size-[6px] bg-[#f2f2f2] rounded-[1px]"></i><i class="size-[6px] bg-[#f2f2f2] rounded-[1px]"></i><i class="size-[6px] bg-[#f2f2f2] rounded-[1px]"></i><i class="size-[6px] bg-[#f2f2f2] rounded-[1px]"></i><i class="size-[6px] bg-[#f2f2f2] rounded-[1px]"></i><i class="size-[6px] bg-[#f2f2f2] rounded-[1px]"></i><i class="size-[6px] bg-[#f2f2f2] rounded-[1px]"></i><i class="size-[6px] bg-[#f2f2f2] rounded-[1px]"></i>
    </div>
  </div>
</footer>
</body>
</html>
